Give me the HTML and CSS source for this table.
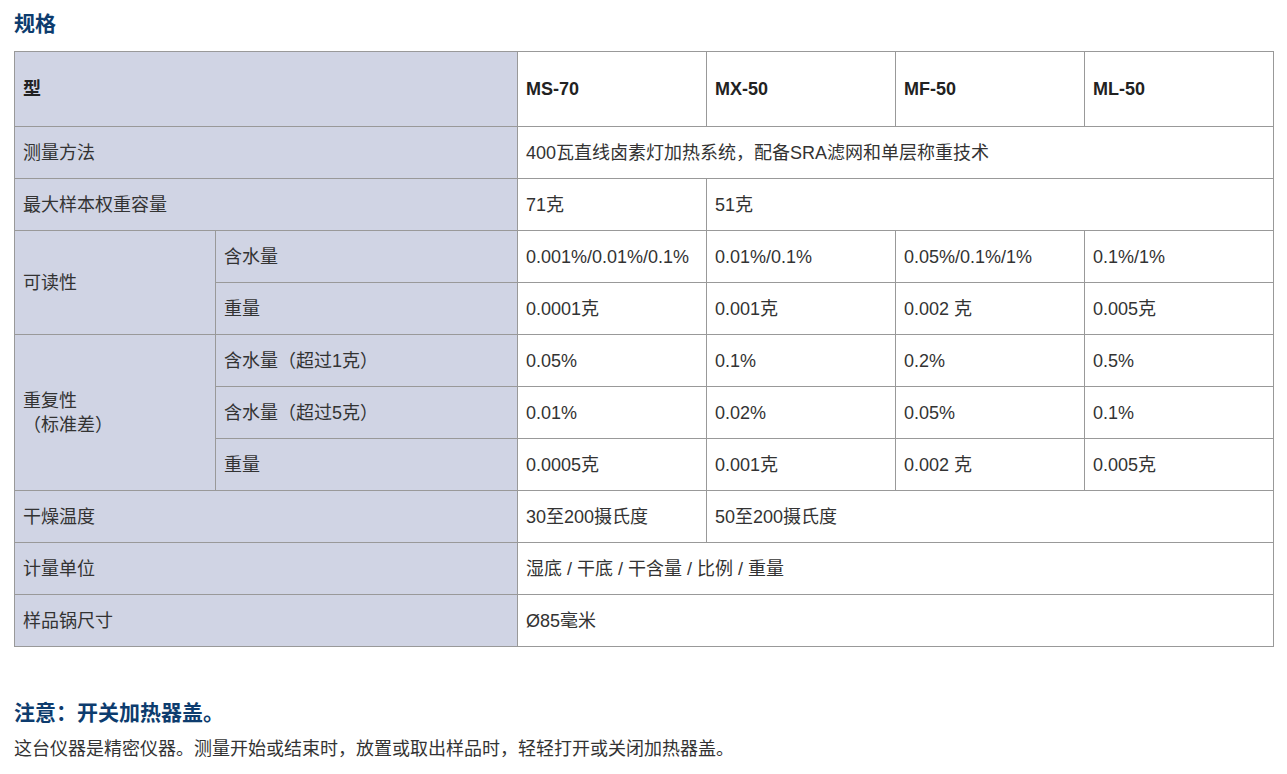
FILE: index.html
```html
<!DOCTYPE html>
<html lang="zh">
<head>
<meta charset="utf-8">
<link rel="stylesheet" href="styles.css">
</head>
<body>
<div class="page">
  <h2 class="title">规格</h2>
  <table class="spec">
    <colgroup>
      <col class="c1"><col class="c2"><col class="cd"><col class="cd"><col class="cd"><col class="cd">
    </colgroup>
    <tr class="head">
      <th class="lab" colspan="2">型</th>
      <th>MS-70</th><th>MX-50</th><th>MF-50</th><th>ML-50</th>
    </tr>
    <tr>
      <td class="lab" colspan="2">测量方法</td>
      <td colspan="4">400瓦直线卤素灯加热系统，配备SRA滤网和单层称重技术</td>
    </tr>
    <tr>
      <td class="lab" colspan="2">最大样本权重容量</td>
      <td>71克</td><td colspan="3">51克</td>
    </tr>
    <tr>
      <td class="lab" rowspan="2">可读性</td>
      <td class="lab">含水量</td>
      <td>0.001%/0.01%/0.1%</td><td>0.01%/0.1%</td><td>0.05%/0.1%/1%</td><td>0.1%/1%</td>
    </tr>
    <tr>
      <td class="lab">重量</td>
      <td>0.0001克</td><td>0.001克</td><td>0.002 克</td><td>0.005克</td>
    </tr>
    <tr>
      <td class="lab" rowspan="3">重复性<br>（标准差）</td>
      <td class="lab">含水量（超过1克）</td>
      <td>0.05%</td><td>0.1%</td><td>0.2%</td><td>0.5%</td>
    </tr>
    <tr>
      <td class="lab">含水量（超过5克）</td>
      <td>0.01%</td><td>0.02%</td><td>0.05%</td><td>0.1%</td>
    </tr>
    <tr>
      <td class="lab">重量</td>
      <td>0.0005克</td><td>0.001克</td><td>0.002 克</td><td>0.005克</td>
    </tr>
    <tr>
      <td class="lab" colspan="2">干燥温度</td>
      <td>30至200摄氏度</td><td colspan="3">50至200摄氏度</td>
    </tr>
    <tr>
      <td class="lab" colspan="2">计量单位</td>
      <td colspan="4">湿底 / 干底 / 干含量 / 比例 / 重量</td>
    </tr>
    <tr>
      <td class="lab" colspan="2">样品锅尺寸</td>
      <td colspan="4">Ø85毫米</td>
    </tr>
  </table>
  <h3 class="note-title">注意：开关加热器盖。</h3>
  <p class="note">这台仪器是精密仪器。测量开始或结束时，放置或取出样品时，轻轻打开或关闭加热器盖。</p>
</div>
</body>
</html>
```

FILE: styles.css
```css
html, body {
  margin: 0;
  padding: 0;
  background: #fff;
}
body {
  font-family: "Liberation Sans", "Noto Sans CJK SC", sans-serif;
  color: #333;
  font-size: 18px;
}
.page {
  padding: 0 14px;
}
.title {
  margin: 0;
  padding-top: 12px;
  height: 51px;
  box-sizing: border-box;
  font-size: 21px;
  line-height: 24px;
  font-weight: bold;
  color: #0d3c6e;
}
.spec {
  border-collapse: collapse;
  table-layout: fixed;
  width: 1259px;
}
.c1 { width: 201px; }
.c2 { width: 302px; }
.cd { width: 189px; }
.spec th, .spec td {
  border: 1px solid #999;
  padding: 0 8px;
  text-align: left;
  vertical-align: middle;
  font-size: 18px;
  line-height: 24px;
  color: #333;
  height: 52px;
  box-sizing: border-box;
}
.spec th {
  font-weight: bold;
  color: #222;
}
.spec tr.head th {
  height: 75px;
}
.spec .lab {
  background: #d0d4e4;
}
.note-title {
  margin: 0;
  padding-top: 54px;
  font-size: 21px;
  line-height: 24px;
  font-weight: bold;
  color: #0d3c6e;
}
.note {
  margin: 12px 0 0;
  font-size: 18px;
  line-height: 24px;
  color: #333;
}
```
